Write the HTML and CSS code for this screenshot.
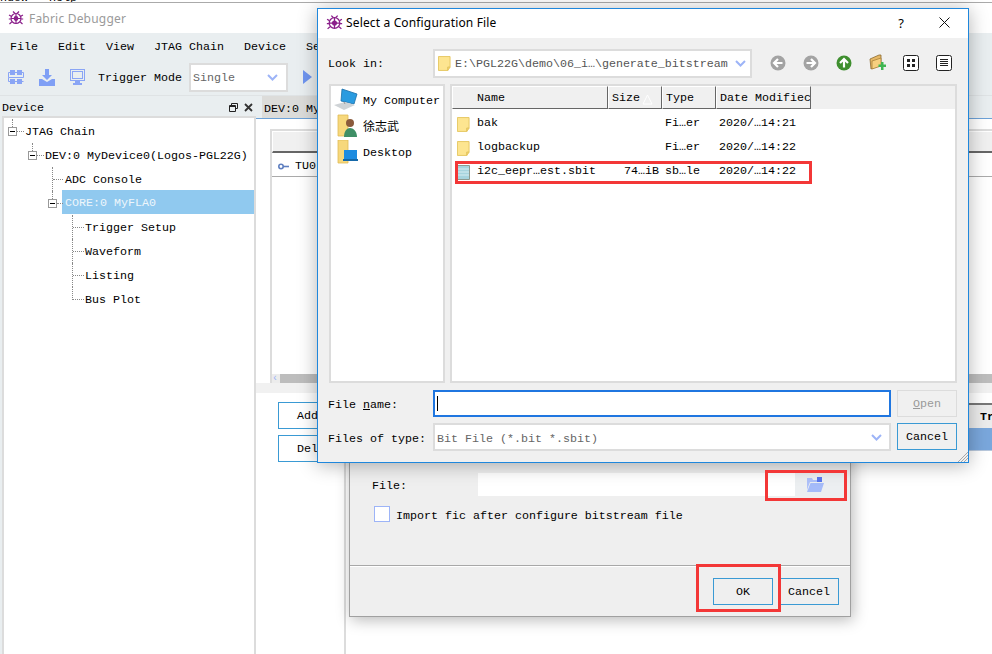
FILE: index.html
```html
<!DOCTYPE html>
<html lang="en">
<head>
<meta charset="utf-8">
<title>Fabric Debugger</title>
<link rel="stylesheet" href="styles.css">
</head>
<body>
<svg class="defs" width="0" height="0" aria-hidden="true">
  <defs>
    <symbol id="bug" viewBox="0 0 16 16">
      <g fill="none" stroke="#8a1f8a" stroke-width="1.2">
        <circle cx="8" cy="8.5" r="5"/>
        <path d="M8 3.5v10M3 8.5h10M5 1.5l2 2M11 1.5l-2 2M1 5l2.2 1.2M15 5l-2.2 1.2M.8 9h2M15.2 9h-2M1.5 14l2.2-2M14.5 14l-2.2-2"/>
      </g>
      <circle cx="8" cy="8.5" r="2.4" fill="#8a1f8a"/>
    </symbol>
    <symbol id="folder" viewBox="0 0 14 16">
      <path d="M.5.5h12.500v11.500h-2.500v3.500h-10z" fill="#fde590" stroke="#e5c65f"/>
      <path d="M10.500 15.500v-3.500h2.500z" fill="#f3d470" stroke="#e5c65f"/>
    </symbol>
    <symbol id="minus" viewBox="0 0 9 9">
      <rect x=".5" y=".5" width="8" height="8" fill="#fff" stroke="#999"/>
      <path d="M2 4.500h5" stroke="#000"/>
    </symbol>
  </defs>
</svg>

<div class="strip"><span class="strip-text">ndow   Help</span></div>

<div class="app">
  <header class="titlebar">
    <svg class="logo" width="16" height="16"><use href="#bug"/></svg>
    <span class="app-title">Fabric Debugger</span>
  </header>
  <nav class="menubar">
    <span class="m-file">File</span>
    <span class="m-edit">Edit</span>
    <span class="m-view">View</span>
    <span class="m-jtag">JTAG Chain</span>
    <span class="m-dev">Device</span>
    <span>Settings</span>
  </nav>
  <div class="toolbar">
    <svg class="tool" width="16" height="16" viewBox="0 0 16 16"><g fill="#8aa5f5"><rect x="2" y="1" width="5" height="5"/><rect x="9" y="1" width="5" height="5"/><rect x="2" y="10" width="5" height="5"/><rect x="9" y="10" width="5" height="5"/></g><path d="M.5 3.500h15v5H.5zM.5 8.500v4h15" fill="none" stroke="#8aa5f5"/></svg>
    <svg class="tool" width="16" height="17" viewBox="0 0 16 17"><path d="M6 0h4v6h3l-5 5-5-5h3z" fill="#7f9ff5"/><path d="M0 10h3l5 3 5-3h3v7H0z" fill="#7f9ff5"/></svg>
    <svg class="tool" width="15" height="16" viewBox="0 0 15 16"><rect x=".5" y=".5" width="14" height="11" fill="none" stroke="#8aa5f5"/><rect x="2.500" y="2.500" width="10" height="7" fill="none" stroke="#8aa5f5"/><path d="M5 12h5v2H5zM3 14h9v2H3z" fill="#8aa5f5"/></svg>
    <span class="mode-label">Trigger Mode</span>
    <div class="combo mode-combo"><span class="muted">Single</span><svg class="chev" width="11" height="7" viewBox="0 0 11 7"><path d="M1 1l4.500 4.500L10 1" fill="none" stroke="#9db4f7" stroke-width="2"/></svg></div>
    <svg class="play" width="9" height="14" viewBox="0 0 9 14"><path d="M0 0l9 7-9 7z" fill="#6f95f0"/></svg>
  </div>

  <main class="workspace">
    <aside class="dock">
      <div class="dock-head">
        <span class="dock-name">Device</span>
        <div class="dock-btns">
          <svg width="9" height="9" viewBox="0 0 9 9"><path d="M2.500 2.500V.5h6v5h-2M.5 2.500h6v6h-6zM.5 3.500h6" fill="none" stroke="#222"/></svg>
          <svg width="9" height="9" viewBox="0 0 9 9"><path d="M1 1l7 7M8 1L1 8" stroke="#333" stroke-width="1.800"/></svg>
        </div>
      </div>
      <div class="tree">
        <div class="row d0"><svg class="exp" width="9" height="9"><use href="#minus"/></svg>JTAG Chain</div>
        <div class="row d1"><svg class="exp" width="9" height="9"><use href="#minus"/></svg>DEV:0 MyDevice0(Logos-PGL22G)</div>
        <div class="row d2 leaf">ADC Console</div>
        <div class="row d2 sel"><svg class="exp" width="9" height="9"><use href="#minus"/></svg><span class="sel-text">CORE:0 MyFLA0</span></div>
        <div class="row d3 leaf">Trigger Setup</div>
        <div class="row d3 leaf">Waveform</div>
        <div class="row d3 leaf">Listing</div>
        <div class="row d3 leaf end">Bus Plot</div>
      </div>
    </aside>

    <section class="center">
      <div class="tabbar"><span class="tab">DEV:0 MyDevice0</span></div>
      <div class="upper">
        <div class="sigbox">
          <div class="sighead"></div>
          <div class="sigrow">
            <svg width="11" height="7" viewBox="0 0 11 7"><circle cx="3" cy="3.500" r="2.200" fill="none" stroke="#5f7fc0" stroke-width="1.600"/><path d="M5 3.500h6" stroke="#5f7fc0" stroke-width="1.600"/></svg>
            <span>TU0</span>
          </div>
          <div class="sigfill"></div>
          <div class="hscroll"><span class="arrow">‹</span><span class="thumb"></span></div>
        </div>
      </div>
      <div class="lower">
        <div class="btncol">
          <button class="btn add">Add</button>
          <button class="btn add">Del</button>
        </div>
        <div class="trig">
          <div class="trig-head">Tr</div>
          <div class="trig-sel"></div>
        </div>
      </div>
    </section>
  </main>
</div>

<!-- Configuration dialog behind -->
<div class="win win-config">
  <div class="cfg-file">
    <span class="cfg-label">File:</span>
    <span class="cfg-input"></span>
    <span class="cfg-browse">
      <svg width="17" height="16" viewBox="0 0 17 16"><path d="M0 1h5l1 2h4v2H3L0 13z" fill="#aec1fa"/><path d="M3.500 6H17l-3 9H0z" fill="#a5bbf9"/><rect x="10" y="0" width="5" height="5" fill="#5a78ee"/></svg>
    </span>
  </div>
  <div class="cfg-check"><span class="checkbox"></span><span class="check-label">Import fic after configure bitstream file</span></div>
  <div class="cfg-foot">
    <button class="btn ok">OK</button>
    <button class="btn cfg-cancel">Cancel</button>
  </div>
</div>

<!-- File dialog -->
<div class="win win-file">
  <header class="fd-title">
    <svg width="17" height="17"><use href="#bug"/></svg>
    <span class="fd-name">Select a Configuration File</span>
    <span class="fd-help">?</span>
    <svg class="fd-close" width="11" height="11" viewBox="0 0 11 11"><path d="M.5.5l10 10M10.500.5l-10 10" stroke="#111"/></svg>
  </header>
  <div class="fd-body">
    <div class="fd-look">
      <span class="fd-label">Look in:</span>
      <div class="combo path-combo">
        <svg width="13" height="15"><use href="#folder"/></svg>
        <span class="path">E:\PGL22G\demo\06_i…\generate_bitstream</span>
        <svg class="chev" width="11" height="7" viewBox="0 0 11 7"><path d="M1 1l4.500 4.500L10 1" fill="none" stroke="#9db4f7" stroke-width="2"/></svg>
      </div>
      <div class="navs">
        <svg width="16" height="16" viewBox="0 0 16 16"><circle cx="8" cy="8" r="7.500" fill="#a3a3a3"/><path d="M12.500 8H5M8 4L4 8l4 4" fill="none" stroke="#fff" stroke-width="2.200"/></svg>
        <svg width="16" height="16" viewBox="0 0 16 16"><circle cx="8" cy="8" r="7.500" fill="#a3a3a3"/><path d="M3.500 8H11M8 4l4 4-4 4" fill="none" stroke="#fff" stroke-width="2.200"/></svg>
        <svg width="16" height="16" viewBox="0 0 16 16"><circle cx="8" cy="8" r="7.500" fill="#3f8f2f"/><path d="M8 12.500V5M4 8l4-4 4 4" fill="none" stroke="#fff" stroke-width="2.200"/></svg>
        <svg width="17" height="17" viewBox="0 0 17 17"><path d="M1 5l9-4h2v10l-10 4z" fill="#e6b866" stroke="#8a6a30" stroke-width=".8"/><path d="M3 7l9-3v8l-9 3z" fill="#f6cf7e" stroke="#a8803a" stroke-width=".8"/><path d="M12 8h2.500v2.500H17V13h-2.500v3H12v-3H9.500v-2.500H12z" fill="#3fb552"/></svg>
        <svg width="16" height="16" viewBox="0 0 16 16"><rect x=".5" y=".5" width="15" height="15" rx="2" fill="#fff" stroke="#222"/><path d="M4 4h3v3H4zM9 4h3v3H9zM4 9h3v3H4zM9 9h3v3H9z" fill="#222"/></svg>
        <svg width="16" height="16" viewBox="0 0 16 16"><rect x=".5" y=".5" width="15" height="15" rx="2" fill="#fff" stroke="#222"/><path d="M4 4.500h8M4 6.500h8M4 8.500h8M4 10.500h8" stroke="#222"/></svg>
      </div>
    </div>

    <div class="fd-panels">
      <div class="places">
        <div class="place">
          <svg width="26" height="24" viewBox="0 0 26 24"><path d="M9 1l15 5-3 10-13-3z" fill="#2a9be0" stroke="#1b6fa8" stroke-width=".8"/><path d="M1 17l11-3 10 3-11 5z" fill="#cfd3d6"/><path d="M11 14l1 2" stroke="#999"/></svg>
          <span class="place-name">My Computer</span>
        </div>
        <div class="place">
          <svg width="26" height="24" viewBox="0 0 26 24"><path d="M5 1h10v21H5z" fill="#f7d87c" stroke="#dfbb57" stroke-width=".8"/><circle cx="17" cy="9" r="4" fill="#8a5a3c"/><path d="M11 23c0-6 3-9 6-9s7 3 7 9z" fill="#3f8f66"/></svg>
          <span class="cjk">徐志武</span>
        </div>
        <div class="place">
          <svg width="26" height="24" viewBox="0 0 26 24"><path d="M5 0h10v23H5z" fill="#f7d87c" stroke="#dfbb57" stroke-width=".8"/><rect x="11" y="10" width="13" height="9" fill="#1d8ce0"/><path d="M10 19h15v2H10z" fill="#1568a8"/></svg>
          <span class="place-name">Desktop</span>
        </div>
      </div>

      <div class="files">
        <div class="fhead">
          <span class="h h-name">Name</span>
          <span class="h h-size">Size<svg class="sort" width="11" height="11" viewBox="0 0 11 11"><path d="M5.500 1L1 10h9z" fill="none" stroke="#fff"/></svg></span>
          <span class="h h-type">Type</span>
          <span class="h h-date">Date Modifiec</span>
        </div>
        <div class="frow">
          <svg width="13" height="15"><use href="#folder"/></svg>
          <span>bak</span><span></span><span>Fi…er</span><span>2020/…14:21</span>
        </div>
        <div class="frow">
          <svg width="13" height="15"><use href="#folder"/></svg>
          <span>logbackup</span><span></span><span>Fi…er</span><span>2020/…14:22</span>
        </div>
        <div class="frow">
          <svg width="13" height="15" viewBox="0 0 13 15"><path d="M.5.5h12v14H.5z" fill="#a6d4de" stroke="#8f9a8f"/><path d="M1 4h11M1 7h11M1 10h11" stroke="#d7eef2"/></svg>
          <span>i2c_eepr…est.sbit</span><span>74…iB</span><span>sb…le</span><span>2020/…14:22</span>
        </div>
      </div>
    </div>

    <div class="fd-form">
      <span class="fd-label lbl-name">File <u>n</u>ame:</span>
      <div class="name-input"><span class="caret"></span></div>
      <button class="btn open" disabled><u>O</u>pen</button>
      <span class="fd-label lbl-type">Files of type:</span>
      <div class="combo type-combo"><span class="muted type-text">Bit File (*.bit *.sbit)</span><svg class="chev" width="11" height="7" viewBox="0 0 11 7"><path d="M1 1l4.500 4.500L10 1" fill="none" stroke="#9db4f7" stroke-width="2"/></svg></div>
      <button class="btn fd-cancel">Cancel</button>
    </div>
  </div>
  <svg class="grip" width="11" height="11" viewBox="0 0 11 11"><path d="M11 1L1 11M11 4l-7 7M11 7l-4 4" stroke="#a8a8a8"/></svg>
</div>

<!-- Red annotations drawn over the screenshot -->
<div class="mark mark-row"></div>
<div class="mark mark-browse"></div>
<div class="mark mark-ok"></div>
</body>
</html>
```
FILE: styles.css
```css
* { box-sizing: border-box; }

html, body {
  margin: 0;
  width: 992px;
  height: 654px;
  overflow: hidden;
  background: #fff;
  color: #000;
  font: 11.67px/1 "Liberation Mono", monospace;
  position: relative;
}

.defs { position: absolute; }

button { font: inherit; color: inherit; background: none; padding: 0; }

.muted { color: #666; }

/* Window behind the application */
.strip {
  height: 3px;
  overflow: hidden;
  background: #fff;
  border-bottom: 1px solid #aaa;
  white-space: pre;
}
.strip-text { display: block; margin-top: -8px; line-height: 12px; }

/* Main application */
.app { display: flex; flex-direction: column; height: 651px; }

.titlebar { height: 30px; flex: none; display: flex; align-items: center; padding-left: 8px; gap: 5px; background: #fff; }
.app-title { font: 12px "Noto Sans", sans-serif; color: #9a9a9a; letter-spacing: .2px; }

.menubar { height: 27px; flex: none; background: #e9eef0; display: flex; align-items: center; padding: 2px 0 0 10px; }
.menubar span { white-space: nowrap; }
.m-file, .m-edit, .m-view { width: 48px; }
.m-jtag { width: 90px; }
.m-dev { width: 62px; }

.toolbar { height: 36px; flex: none; background: #e9eef0; display: flex; align-items: center; padding-left: 8px; border-bottom: 1px solid #dfe3e5; padding-bottom: 1px; }
.tool { margin-right: 15px; flex: none; }
.tool:nth-child(3) { margin-right: 13px; }
.mode-label { width: 91px; padding-top: 4px; }
.combo { display: flex; align-items: center; background: #fff; border: 2px solid #dcdcdc; }
.chev { flex: none; margin-left: auto; }
.mode-combo { width: 99px; height: 29px; padding: 0 8px 0 2px; }
.mode-combo .muted { padding-top: 4px; }
.play { margin-left: 15px; }

.workspace { flex: 1; display: flex; min-height: 0; }

.dock { width: 256px; flex: none; display: flex; flex-direction: column; background: #e9eef0; }
.dock-head { height: 20px; flex: none; display: flex; align-items: center; justify-content: space-between; padding: 2px 3px 0 2px; }
.dock-name { padding-top: 4px; }
.dock-btns { display: flex; gap: 6px; }
.tree { flex: 1; margin-left: 2px; background: #fff; border: 2px solid #dcdcdc; border-bottom: 0; padding-top: 1px; }

.row { height: 24px; display: flex; align-items: center; position: relative; white-space: nowrap; padding-top: 4px; }
.d0 { padding-left: 21px; }
.d1 { padding-left: 41px; }
.d2 { padding-left: 61px; }
.d3 { padding-left: 81px; }

.exp { position: absolute; top: 8px; }
.d0 .exp { left: 4px; }
.d1 .exp { left: 24px; }
.d2 .exp { left: 44px; }

.row::before, .row::after { content: ""; position: absolute; }
.d0::before, .d1::before { width: 0; top: 0; height: 8px; border-left: 1px dotted #888; }
.d0::before { left: 8px; }
.d1::before { left: 28px; }
.d0::after, .d1::after, .d2::after { height: 0; top: 12px; border-top: 1px dotted #888; }
.d0::after { left: 13px; width: 7px; }
.d1::after { left: 33px; width: 7px; }
.d2::after { left: 53px; width: 6px; }
.d3::after { left: 69px; width: 11px; top: 12px; height: 0; border-top: 1px dotted #888; }
.d2.leaf::before { left: 48px; top: 0; height: 24px; border-left: 1px dotted #888; }
.d2.leaf::after { left: 49px; width: 10px; }
.d2.sel::before { left: 48px; top: 0; height: 8px; border-left: 1px dotted #888; }
.d3::before { left: 68px; top: 0; height: 24px; border-left: 1px dotted #888; }
.d3.end::before { height: 13px; }

.sel-text { position: absolute; left: 58px; right: 0; top: -1px; height: 24px; background: #90c9ef; color: #eef6fb; display: flex; align-items: center; padding: 4px 0 0 3px; }

.center { flex: 1; min-width: 0; display: flex; flex-direction: column; overflow: hidden; }
.tabbar { height: 23px; flex: none; background: #e9eef0; border-bottom: 1px solid #6da2d8; padding-left: 6px; }
.tab { display: block; height: 22px; width: 300px; line-height: 26px; padding-left: 2px; background: #dcdcda; }

.upper { flex: none; height: 264px; padding: 10px 0 0 14px; background: #fff; }
.sigbox { height: 254px; width: 760px; display: flex; flex-direction: column; border: 2px solid #dcdcdc; border-right: 0; border-bottom: 0; }
.sighead { height: 22px; flex: none; background: #f0f0f0; border-top: 1px solid #fff; border-left: 1px solid #fff; border-bottom: 2px solid #666; }
.sigrow { height: 24px; flex: none; display: flex; align-items: center; gap: 6px; padding: 3px 0 0 6px; border-bottom: 1px solid #aaa; }
.sigrow span { padding-top: 1px; }
.sigfill { flex: 1; }
.hscroll { height: 9px; flex: none; display: flex; background: #ececec; }
.arrow { width: 8px; color: #9db4f7; line-height: 9px; font-size: 10px; }
.thumb { flex: 1; background: #bdbdbd; }

.lower { flex: 1; display: flex; background: #fff; border-top: 10px solid #f1f1f1; }
.btncol { width: 90px; flex: none; display: flex; flex-direction: column; gap: 6px; padding: 9px 0 0 22px; border-right: 2px solid #dcdcdc; }
.btn { width: 60px; height: 27px; flex: none; background: #f0f0f0; border: 1px solid #3a9ad4; display: block; text-align: center; padding-top: 3px; }
.btn.add { background: #fff; text-align: left; padding-left: 18px; }

.trig { margin-left: 623px; width: 40px; padding-top: 10px; }
.trig-head { height: 25px; background: #ececec; border-top: 2px solid #777; font-weight: bold; padding: 7px 0 0 11px; }
.trig-sel { height: 23px; background: #7aa7dc; border-bottom: 1px solid #b8c8dc; }

/* Floating windows */
.win { position: absolute; background: #f0f0f0; }

.win-config {
  left: 349px; top: 440px; width: 502px; height: 177px;
  background: #efefef;
  border: 1px solid #a0a0a0;
  border-top: 0;
  box-shadow: 2px 3px 14px rgba(0, 0, 0, .28);
  display: flex;
  flex-direction: column;
  padding-top: 33px;
}
.cfg-file { height: 23px; flex: none; display: flex; align-items: center; padding-left: 22px; }
.cfg-label { width: 106px; padding-top: 4px; }
.cfg-input { width: 317px; height: 23px; background: #fff; }
.cfg-browse { width: 48px; height: 23px; background: #eceff1; display: flex; align-items: center; padding-left: 12px; }
.cfg-check { height: 16px; flex: none; margin-top: 10px; padding-left: 24px; display: flex; align-items: center; gap: 6px; }
.check-label { padding-top: 6px; }
.checkbox { width: 16px; height: 16px; background: #fff; border: 1px solid #9db4f7; }
.cfg-foot {
  margin-top: 43px; flex: 1; display: flex; padding: 12px 11px 0 0; justify-content: flex-end; gap: 6px;
  border-top: 1px solid #a8a8a8;
  box-shadow: inset 0 1px 0 #fff;
}
.ok, .cfg-cancel { background: #efefef; }

.win-file {
  left: 317px; top: 8px; width: 652px; height: 455px;
  border: 1px solid #1f87dc;
  box-shadow: 0 2px 18px rgba(0, 0, 0, .3);
}
.fd-title { height: 29px; background: #fff; display: flex; align-items: center; padding: 0 18px 2px 8px; }
.fd-name { font: 12px "Noto Sans", sans-serif; margin-left: 3px; letter-spacing: .15px; }
.fd-help { margin-left: auto; font: 13px "Noto Sans", sans-serif; }
.fd-close { margin-left: 35px; }

.fd-body { padding: 11px 11px 0 10px; }
.fd-label { white-space: nowrap; }
.fd-look { height: 29px; display: flex; align-items: center; }
.fd-look .fd-label { width: 105px; flex: none; padding-top: 2px; }
.path-combo { width: 319px; height: 29px; padding: 0 4px 0 3px; flex: none; }
.path { margin-left: 4px; color: #555; white-space: nowrap; padding-top: 2px; }
.navs { display: flex; align-items: center; gap: 17px; margin-left: 18px; }
.navs svg { margin-bottom: 2px; }

.fd-panels { margin-top: 6px; height: 299px; display: flex; gap: 5px; margin-left: 1px; }
.places { width: 116px; flex: none; background: #fff; border: 2px solid #dcdcdc; padding-top: 1px; }
.place { height: 26px; display: flex; align-items: center; gap: 4px; padding-left: 2px; white-space: nowrap; }
.place svg { flex: none; }
.place-name { padding-top: 4px; }
.cjk { font: 12px "Noto Sans CJK SC", sans-serif; padding-bottom: 2px; }

.files { flex: 1; background: #fff; border: 2px solid #dcdcdc; }
.fhead { height: 23px; display: flex; background: #f0f0f0; margin-bottom: 1px; }
.h {
  display: flex; align-items: center; flex: none; overflow: hidden; white-space: nowrap;
  border-top: 1px solid #fff; border-left: 1px solid #fff;
  border-right: 1px solid #666; border-bottom: 1px solid #666;
  padding: 3px 0 0 3px;
}
.h-name { width: 156px; padding-left: 24px; }
.h-size { width: 54px; }
.sort { margin-left: 2px; flex: none; }
.h-type { width: 54px; }
.h-date { width: 95px; }

.frow { height: 24px; display: grid; grid-template-columns: 20px 147px 41px 54px 1fr; align-items: center; padding: 4px 0 0 5px; white-space: nowrap; }

.fd-form {
  margin-top: 7px;
  display: grid;
  grid-template-columns: 105px 458px 60px;
  grid-template-rows: 27px 28px;
  row-gap: 6px;
  align-items: center;
}
.lbl-name { padding-top: 4px; }
.lbl-type { padding-top: 6px; }
.name-input { width: 458px; height: 27px; background: #fff; border: 2px solid #1f76e0; padding: 4px 0 0 2px; }
.caret { display: block; width: 1px; height: 15px; background: #000; }
.type-combo { width: 458px; height: 28px; padding: 0 7px 0 2px; }
.type-text { padding-top: 5px; }
.open, .fd-cancel { margin-left: 6px; justify-self: start; }
.open { background: #f0f0f0; border-color: #dcdcdc; color: #999; height: 27px; }
.fd-cancel { align-self: start; }

.grip { position: absolute; right: 0; bottom: 0; }

/* Annotations */
.mark { position: absolute; border: 3px solid #f33737; }
.mark-row { left: 455px; top: 161px; width: 357px; height: 23px; }
.mark-browse { left: 765px; top: 470px; width: 82px; height: 31px; }
.mark-ok { left: 696px; top: 564px; width: 85px; height: 48px; }
```
